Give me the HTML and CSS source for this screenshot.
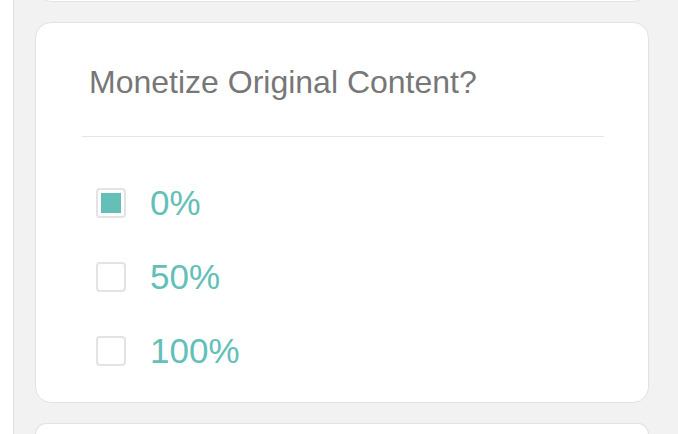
FILE: index.html
```html
<!DOCTYPE html>
<html>
<head>
<meta charset="utf-8">
<link rel="stylesheet" href="styles.css">
</head>
<body>
<div class="page">
  <div class="rail"></div>
  <div class="column">
    <div class="card card-prev"></div>
    <div class="card card-main">
      <h2 class="title">Monetize Original Content?</h2>
      <div class="divider"></div>
      <div class="options">
        <label class="option"><span class="box checked"><span class="fill"></span></span><span class="label">0%</span></label>
        <label class="option"><span class="box"></span><span class="label">50%</span></label>
        <label class="option"><span class="box"></span><span class="label">100%</span></label>
      </div>
    </div>
    <div class="card card-next"></div>
  </div>
</div>
</body>
</html>
```
FILE: styles.css
```css
html, body {
  margin: 0;
  padding: 0;
  height: 100%;
  overflow: hidden;
  background: #f2f2f2;
  font-family: "Liberation Sans", Arial, sans-serif;
}
.page {
  display: flex;
  height: 434px;
  overflow: hidden;
}
.rail {
  width: 13px;
  flex: none;
  background: #ffffff;
  border-right: 1px solid #dce1e7;
}
.column {
  width: 614px;
  height: 434px;
  overflow: hidden;
  margin-left: 21px;
  display: flex;
  flex-direction: column;
  gap: 20px;
}
.card {
  background: #ffffff;
  border: 1px solid #e2e2e2;
  border-radius: 16px;
  box-sizing: border-box;
  flex: none;
}
.card-prev {
  height: 40px;
  margin-top: -38px;
}
.card-main {
  height: 381px;
  padding: 41px 44px 0 46px;
}
.card-next {
  height: 11px;
  border-bottom: none;
  border-radius: 16px 16px 0 0;
}
.title {
  margin: 0;
  padding-left: 7px;
  font-weight: normal;
  font-size: 32px;
  line-height: 37px;
  color: #777777;
}
.divider {
  height: 1px;
  background: #e5e5e5;
  margin-top: 35px;
}
.options {
  margin-top: 51px;
  padding-left: 14px;
  display: flex;
  flex-direction: column;
  gap: 44px;
}
.option {
  display: flex;
  align-items: center;
  height: 30px;
  gap: 24px;
}
.box {
  width: 30px;
  height: 30px;
  box-sizing: border-box;
  border: 2px solid #e3e3e3;
  border-radius: 4px;
  background: #fff;
  display: flex;
  align-items: center;
  justify-content: center;
  flex: none;
}
.fill {
  width: 20px;
  height: 20px;
  background: #64bfb8;
}
.label {
  font-size: 35px;
  line-height: 30px;
  color: #63c0b8;
}
```
